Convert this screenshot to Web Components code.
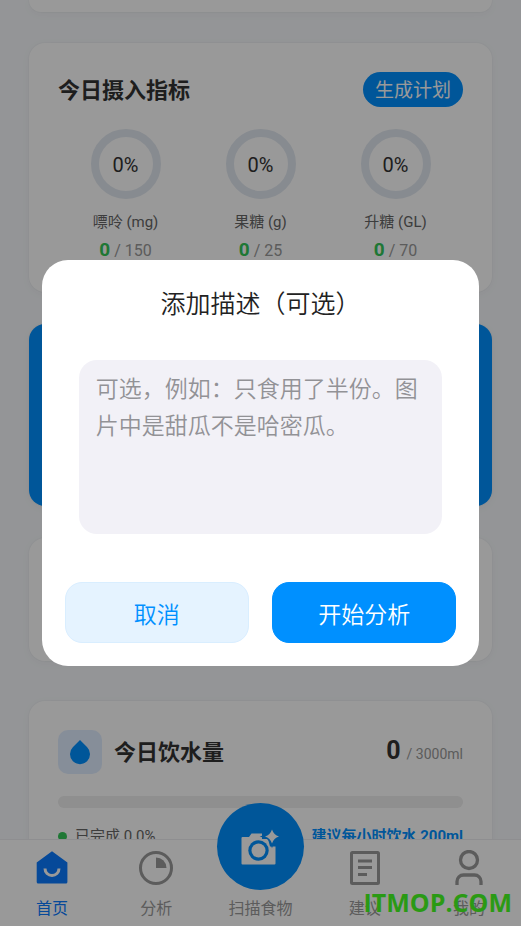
<!DOCTYPE html>
<html lang="zh-CN">
<head>
<meta charset="utf-8">
<meta name="viewport" content="width=device-width, initial-scale=1">
<title>今日摄入</title>
<style>
  html, body { margin: 0; height: 100%; }
  body {
    font-family: Roboto, "Noto Sans CJK SC", sans-serif;
    color: #333;
    background: #f7f9fc;
  }
</style>
</head>
<body>
<health-app></health-app>

<script>
const define = (name, html) => {
  const template = document.createElement('template');
  template.innerHTML = html;
  customElements.define(name, class extends HTMLElement {
    constructor() {
      super();
      this.attachShadow({ mode: 'open' }).append(template.content.cloneNode(true));
    }
  });
};

define('app-card', `
  <style>
    :host {
      display: block; box-sizing: border-box; padding: 29px;
      background: #fff; border-radius: 16px;
      box-shadow: 0 0 0 1px rgba(0,0,0,.02), 0 2px 10px rgba(0,0,0,.04);
    }
    :host([tone="blue"]) { background: #0090ff; }
  </style>
  <slot></slot>`);

define('intake-ring', `
  <style>
    :host { display: flex; flex-direction: column; align-items: center; }
    .ring {
      box-sizing: border-box; width: 70px; height: 70px; padding-top: 2px; border: 8px solid #e2e8f0;
      border-radius: 50%; display: grid; place-items: center; font-size: 20px; line-height: 24px;
    }
    .label { margin-top: 12px; font-size: 15px; line-height: 22px; color: #666; white-space: nowrap; }
    .value {
      display: flex; align-items: baseline; gap: 4px; height: 26px; margin-top: 4px;
      font-size: 16px; line-height: 26px; color: #999; white-space: nowrap;
    }
    b { font-size: 19px; color: #34c759; }
  </style>
  <div class="ring"><slot name="percent"></slot></div>
  <div class="label"><slot></slot></div>
  <div class="value"><b><slot name="now"></slot></b><span>/</span><span><slot name="limit"></slot></span></div>`);

define('intake-panel', `
  <style>
    :host { display: block; }
    header { display: flex; align-items: center; justify-content: space-between; }
    h2 { margin: 0; padding-top: 2px; font-size: 22px; line-height: 32px; font-weight: 700; }
    button {
      border: 0; padding: 2px 12px 0; height: 35px; border-radius: 18px; background: #0090ff;
      color: #fff; font: inherit; font-size: 19px; line-height: 33px;
    }
    .rings { display: grid; grid-template-columns: repeat(3, 1fr); margin-top: 22px; }
  </style>
  <header><h2>今日摄入指标</h2><button type="button">生成计划</button></header>
  <div class="rings">
    <intake-ring><span slot="percent">0%</span>嘌呤 (mg)<span slot="now">0</span><span slot="limit">150</span></intake-ring>
    <intake-ring><span slot="percent">0%</span>果糖 (g)<span slot="now">0</span><span slot="limit">25</span></intake-ring>
    <intake-ring><span slot="percent">0%</span>升糖 (GL)<span slot="now">0</span><span slot="limit">70</span></intake-ring>
  </div>`);

define('water-panel', `
  <style>
    :host { display: block; }
    header { display: flex; align-items: center; gap: 12px; }
    .drop { width: 44px; height: 44px; border-radius: 10px; background: #e0edff; display: grid; place-items: center; }
    h2 { margin: 0; padding-top: 2px; flex: 1; font-size: 22px; line-height: 32px; font-weight: 700; }
    .amount { display: flex; align-items: baseline; gap: 6px; font-size: 14px; line-height: 30px; color: #999; white-space: nowrap; }
    .amount b { font-size: 25px; color: #333; }
    .bar { height: 12px; border-radius: 6px; background: #eee; margin-top: 22px; }
    footer { display: flex; align-items: center; margin-top: 17px; font-size: 15px; line-height: 22px; white-space: nowrap; }
    .dot { width: 9px; height: 9px; border-radius: 50%; background: #34c759; margin-right: 8px; }
    .done { flex: 1; color: #666; }
    .tip { color: #0090ff; font-weight: 700; }
  </style>
  <header>
    <span class="drop"><svg width="22" height="26" viewBox="0 0 22 26" aria-hidden="true"><path fill="#0090ff" d="M11 1 18 8a10 10 0 1 1-14 0Z"/></svg></span>
    <h2>今日饮水量</h2>
    <span class="amount"><b>0</b><span>/ 3000ml</span></span>
  </header>
  <div class="bar"></div>
  <footer><span class="dot"></span><span class="done">已完成 0.0%</span><span class="tip">建议每小时饮水 200ml</span></footer>`);

define('tab-item', `
  <style>
    :host { display: block; min-width: 0; color: #999; }
    :host([active]) { color: #0a7aff; }
    a { display: flex; flex-direction: column; align-items: center; color: inherit; text-decoration: none; }
    .icon { width: 36px; height: 36px; }
    .label { margin-top: 12px; font-size: 16px; line-height: 22px; white-space: nowrap; }
    :host([raised]) .icon {
      width: 87px; height: 87px; margin: -47px 0 -4px; border-radius: 50%;
      background: #0090ff; color: #fff; display: grid; place-items: center;
    }
    ::slotted(svg) { display: block; }
  </style>
  <a href="#"><span class="icon"><slot name="icon"></slot></span><span class="label"><slot></slot></span></a>`);

define('tab-bar', `
  <style>
    :host { display: block; background: #fff; border-top: 1px solid #ededf0; padding: 10px 0 6px; }
    nav { display: grid; grid-template-columns: repeat(5, 1fr); }
  </style>
  <nav>
    <tab-item active><svg slot="icon" width="36" height="36" viewBox="0 0 36 36"><path fill="currentColor" d="M18 1.300 33.400 12.500V32a1.500 1.500 0 0 1-1.500 1.500H4.200A1.500 1.500 0 0 1 2.700 32V12.500Z"/><path fill="none" stroke="#fff" stroke-width="3" d="M11 18.500a7 7 0 0 0 14 0"/></svg>首页</tab-item>
    <tab-item><svg slot="icon" width="36" height="36" viewBox="0 0 36 36"><circle cx="18" cy="18" r="15.500" fill="none" stroke="currentColor" stroke-width="3"/><path fill="currentColor" d="M18 7.500A10.500 10.500 0 0 1 28.500 18H18Z"/></svg>分析</tab-item>
    <tab-item raised><svg slot="icon" width="40" height="40" viewBox="0 0 40 40"><path fill="currentColor" d="M2.500 10h6.500L11.500 6.500H22V12h6l2 7.500h5.500v17a1 1 0 0 1-1 1h-32a1 1 0 0 1-1-1V11a1 1 0 0 1 1-1Z"/><circle cx="18.500" cy="23.500" r="10.200" fill="#0090ff"/><circle cx="18.500" cy="23.500" r="7" fill="currentColor"/><path fill="currentColor" stroke="#0090ff" stroke-width="3" paint-order="stroke" d="M32 2.500Q33.800 8 39 9.500 33.800 11 32 16.500 30.200 11 25 9.500 30.200 8 32 2.500Z"/></svg>扫描食物</tab-item>
    <tab-item><svg slot="icon" width="36" height="36" viewBox="0 0 36 36"><rect x="4.500" y="2.500" width="27" height="31" rx="1" fill="none" stroke="currentColor" stroke-width="3"/><path stroke="currentColor" stroke-width="3" d="M11 11h14M11 17.500h14M11 24.500h9"/></svg>建议</tab-item>
    <tab-item><svg slot="icon" width="36" height="36" viewBox="0 0 36 36"><g fill="none" stroke="currentColor" stroke-width="3.300"><circle cx="18" cy="10" r="8.500"/><path d="M6 35v-3.500a6.500 6.500 0 0 1 6.500-6.500h11a6.500 6.500 0 0 1 6.500 6.500V35"/></g></svg>我的</tab-item>
  </nav>`);

define('describe-dialog', `
  <style>
    :host { display: grid; grid-template-columns: minmax(0, 1fr); align-items: center; background: rgba(0,0,0,.4); padding: 0 8%; }
    form { background: #fff; border-radius: 26px; padding: 23px; color: #222; font-family: Roboto, "Noto Sans CJK SC DemiLight", "Noto Sans CJK SC", sans-serif; }
    label { display: block; text-align: center; font-size: 25px; line-height: 40px; padding-top: 2px; }
    textarea {
      display: block; box-sizing: border-box; width: calc(100% - 28px); height: 174px;
      margin: 35px 14px 48px; padding: 11px 17px; border: 0; border-radius: 18px; resize: none;
      background: #f2f1f7; font: inherit; font-size: 23px; line-height: 37px; color: #222; overflow: hidden;
    }
    textarea::placeholder { color: #929296; opacity: 1; }
    .actions { display: grid; grid-template-columns: 1fr 1fr; gap: 23px; }
    button {
      height: 61px; border: 1px solid #0090ff; border-radius: 17px; padding: 0;
      background: #0090ff; color: #fff; font: inherit; font-size: 23px;
    }
    .cancel { background: #e5f3ff; border-color: #d9eeff; color: #0090ff; }
  </style>
  <form role="dialog" aria-modal="true">
    <label for="note">添加描述（可选）</label>
    <textarea id="note" placeholder="可选，例如：只食用了半份。图片中是甜瓜不是哈密瓜。"></textarea>
    <div class="actions"><button class="cancel" type="button">取消</button><button type="button">开始分析</button></div>
  </form>`);

define('health-app', `
  <style>
    :host { display: flex; flex-direction: column; height: 100vh; position: relative; overflow: hidden; }
    main { flex: 1; min-height: 0; overflow-y: auto; scrollbar-width: none; padding: 0 29px; }
    app-card { margin-bottom: 32px; }
    .previous { padding: 12px 0 0; border-radius: 0 0 16px 16px; margin-bottom: 31px; }
    .promo { height: 182px; }
    .tips { height: 123px; margin-bottom: 40px; }
    tab-bar { position: relative; }
    describe-dialog { position: absolute; inset: 0; }
    .mark {
      position: absolute; right: 9px; bottom: 6px; font: 700 25px/36px "Open Sans", sans-serif;
      color: #2a9a14;
    }
  </style>
  <main>
    <app-card class="previous"></app-card>
    <app-card><intake-panel></intake-panel></app-card>
    <app-card class="promo" tone="blue"></app-card>
    <app-card class="tips"></app-card>
    <app-card><water-panel></water-panel></app-card>
  </main>
  <tab-bar></tab-bar>
  <describe-dialog></describe-dialog>
  <span class="mark">ITMOP.COM</span>`);
</script>
</body>
</html>
